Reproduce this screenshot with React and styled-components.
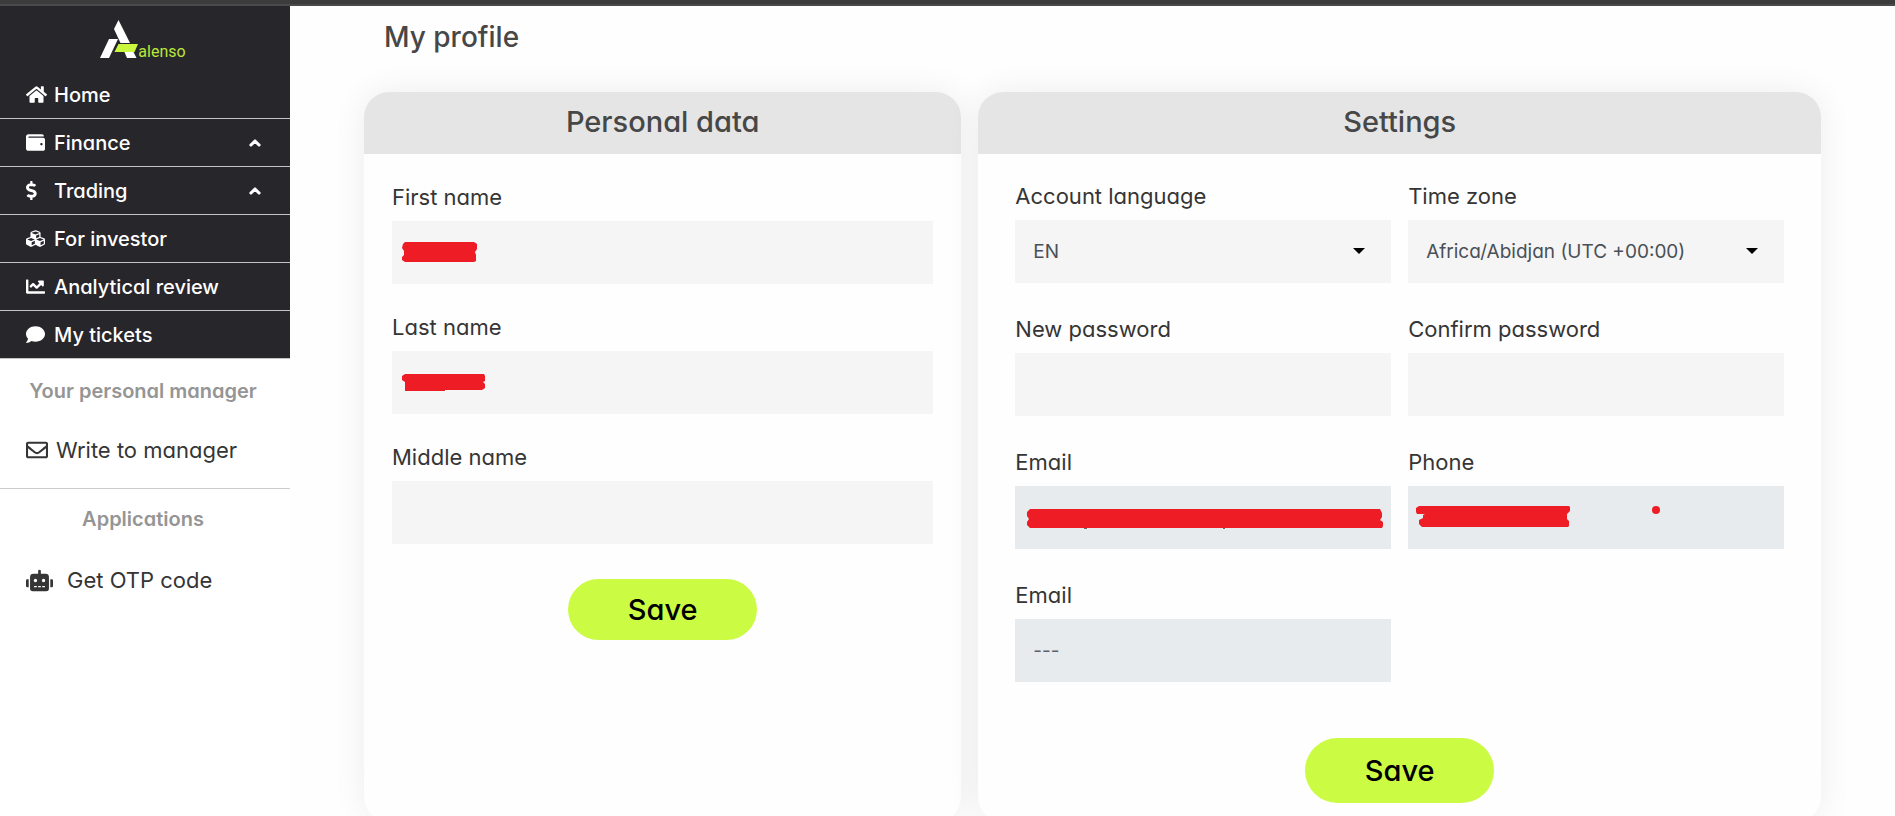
import { useId } from 'react';
import styled, { createGlobalStyle, css } from 'styled-components';
import {
    FaChartLine,
    FaChevronUp,
    FaComment,
    FaCubes,
    FaDollarSign,
    FaHome,
    FaRegEnvelope,
    FaRobot,
    FaWallet,
} from 'react-icons/fa';

const GlobalStyle = createGlobalStyle`
    *, *::before, *::after {
        box-sizing: border-box;
    }
    body {
        margin: 0;
        background: #fefefe;
        color: #353535;
        font-family: Inter, 'Open Sans', sans-serif;
        font-feature-settings: 'cv11';
        font-size: 20px;
    }
    button, input, select {
        font: inherit;
        font-feature-settings: inherit;
    }
`;

const Page = styled.div`
    display: flex;
    flex-direction: column;
    height: 100vh;
    border-top: 4px solid #3c3c3c;
`;

const TopLine = styled.div`
    flex: none;
    height: 2px;
    background: #4a4a4a;
`;

const Body = styled.div`
    display: flex;
    flex: 1;
    min-height: 0;
`;

const Sidebar = styled.aside`
    flex: none;
    width: 290px;
    background: #ffffff;
`;

const DarkBlock = styled.div`
    background: #27262b;
    color: #ffffff;
`;

const LogoLink = styled.a`
    display: flex;
    justify-content: center;
    align-items: flex-end;
    height: 65px;
    padding: 0 4px 12px 0;
    color: #b9e63b;
    text-decoration: none;
`;

const LogoMark = styled.svg`
    display: block;
    width: 38px;
    height: 40px;
`;

const LogoText = styled.span`
    font-family: Roboto, sans-serif;
    font-size: 16px;
    line-height: 14px;
`;

const MenuLink = styled.a`
    display: flex;
    align-items: center;
    height: 48px;
    padding: 0 29px 0 26px;
    border-bottom: 1px solid #c4c4c6;
    color: #ffffff;
    font-size: 20px;
    font-weight: 500;
    text-decoration: none;
`;

const MenuIcon = styled.span`
    display: flex;
    flex: none;
    width: 28px;
`;

const MenuText = styled.span`
    flex: 1;
`;

const Chevron = styled(FaChevronUp)`
    stroke: currentColor;
    stroke-width: 50px;
`;

const SideTitle = styled.h2`
    margin: 0;
    padding-right: 4px;
    color: #959595;
    font-size: 20px;
    font-weight: 600;
    line-height: 30px;
    text-align: center;
`;

const SideSection = styled.section`
    padding-top: ${({ $top }) => $top}px;
    ${({ $ruled }) => $ruled && css`
        padding-bottom: 21px;
        border-bottom: 1px solid #cccccc;
    `}
`;

const SideLink = styled.a`
    display: flex;
    align-items: center;
    gap: ${({ $gap }) => $gap}px;
    margin-top: ${({ $top }) => $top}px;
    padding-left: 26px;
    color: #353535;
    font-size: 22px;
    line-height: 34px;
    text-decoration: none;
`;

const Main = styled.main`
    flex: 1;
    min-width: 0;
    padding: 10px 74px 30px;
    overflow-y: auto;
    scrollbar-width: none;
`;

const PageTitle = styled.h1`
    margin: 0 0 34px 20px;
    color: #474747;
    font-size: 28px;
    font-weight: 500;
    line-height: 42px;
`;

const Cards = styled.div`
    display: grid;
    grid-template-columns: 41% 1fr;
    gap: 17px;
`;

const Card = styled.section`
    border-radius: 25px;
    background: #fefefe;
    box-shadow: 0 0 34px rgba(0, 0, 0, 0.07);
`;

const CardTitle = styled.h2`
    margin: 0;
    padding-bottom: 2px;
    border-radius: 25px 25px 0 0;
    background: #e5e5e5;
    color: #474747;
    font-size: 29px;
    font-weight: 500;
    line-height: 60px;
    text-align: center;
`;

const Form = styled.form`
    display: flex;
    flex-direction: column;
    align-items: center;
    padding: ${({ $top }) => $top}px ${({ $side }) => $side}px 19px;
`;

const Fields = styled.div`
    display: grid;
    grid-template-columns: repeat(${({ $columns }) => $columns}, 1fr);
    gap: ${({ $rowGap }) => $rowGap}px 17px;
    width: 100%;
`;

const FieldLabel = styled.label`
    display: block;
    margin-bottom: 7px;
    color: #353535;
    font-size: 22px;
    line-height: 34px;
`;

const FieldBox = styled.div`
    position: relative;
`;

const controlStyle = css`
    display: block;
    width: 100%;
    height: 63px;
    padding: 0 18px;
    border: 0;
    border-radius: 0;
    outline: 0;
    background: #f5f5f5;
    color: #495057;
    font-size: 19px;
`;

const Input = styled.input`
    ${controlStyle}
    &:disabled {
        background: #e8ebee;
        opacity: 1;
    }
    &::placeholder {
        color: #5b636b;
        opacity: 1;
    }
`;

const Select = styled.select`
    ${controlStyle}
    appearance: none;
    cursor: pointer;
`;

const Caret = styled.svg`
    position: absolute;
    top: 28px;
    right: 26px;
    width: 12px;
    height: 6px;
    pointer-events: none;
`;

const Scribble = styled.svg`
    position: absolute;
    top: 0;
    left: 0;
    width: 376px;
    height: 63px;
    fill: #ee1c25;
    pointer-events: none;
`;

const SaveButton = styled.button`
    width: 189px;
    height: ${({ $tall }) => ($tall ? 65 : 61)}px;
    margin-top: ${({ $tall }) => ($tall ? 56 : 35)}px;
    border: 0;
    border-radius: 33px;
    background: #cbfc43;
    color: #000000;
    font-size: 29px;
    font-weight: 500;
    cursor: pointer;
`;

const Logo = () => (
    <LogoMark viewBox="0 0 38 40" aria-hidden="true">
        <path d="M9 20h9L9 39H0z" fill="#ffffff" />
        <path d="M18.500 1l11.500 23H20.500L14 10z" fill="#ffffff" />
        <path d="M24 32h9l3.500 7H27z" fill="#ffffff" />
        <path d="M18.500 25H38l-3.500 8H14.500z" fill="#c9f83e" />
    </LogoMark>
);

const menu = [
    { text: 'Home', Icon: FaHome, size: 21 },
    { text: 'Finance', Icon: FaWallet, size: 19, open: true },
    { text: 'Trading', Icon: FaDollarSign, size: 19, open: true },
    { text: 'For investor', Icon: FaCubes, size: 19 },
    { text: 'Analytical review', Icon: FaChartLine, size: 19 },
    { text: 'My tickets', Icon: FaComment, size: 19 },
];

const Field = ({ label, options, scribble, ...props }) => {
    const id = useId();
    return (
        <div>
            <FieldLabel htmlFor={id}>{label}</FieldLabel>
            <FieldBox>
                {options ? (
                    <Select id={id} {...props}>
                        {options.map((option) => (
                            <option key={option}>{option}</option>
                        ))}
                    </Select>
                ) : (
                    <Input id={id} {...props} />
                )}
                {options && (
                    <Caret viewBox="0 0 12 6" aria-hidden="true">
                        <path d="M0 0h12L6 6z" />
                    </Caret>
                )}
                {scribble && (
                    <Scribble viewBox="0 0 376 63" aria-hidden="true">
                        {scribble}
                    </Scribble>
                )}
            </FieldBox>
        </div>
    );
};

const App = () => (
    <>
        <GlobalStyle />
        <Page>
            <TopLine />
            <Body>
                <Sidebar>
                    <DarkBlock>
                        <LogoLink href="#home">
                            <Logo />
                            <LogoText>alenso</LogoText>
                        </LogoLink>
                        <nav>
                            {menu.map(({ text, Icon, size, open }) => (
                                <MenuLink key={text} href="#menu">
                                    <MenuIcon>
                                        <Icon size={size} preserveAspectRatio="xMinYMid" />
                                    </MenuIcon>
                                    <MenuText>{text}</MenuText>
                                    {open && <Chevron size={12} />}
                                </MenuLink>
                            ))}
                        </nav>
                    </DarkBlock>
                    <SideSection $top={17} $ruled>
                        <SideTitle>Your personal manager</SideTitle>
                        <SideLink href="#manager" $gap={8} $top={27}>
                            <FaRegEnvelope size={22} />
                            Write to manager
                        </SideLink>
                    </SideSection>
                    <SideSection $top={15}>
                        <SideTitle>Applications</SideTitle>
                        <SideLink href="#otp" $gap={14} $top={29}>
                            <FaRobot size={27} />
                            Get OTP code
                        </SideLink>
                    </SideSection>
                </Sidebar>
                <Main>
                    <PageTitle>My profile</PageTitle>
                    <Cards>
                        <Card>
                            <CardTitle>Personal data</CardTitle>
                            <Form $top={26} $side={28}>
                                <Fields $columns={1} $rowGap={26}>
                                    <Field
                                        label="First name"
                                        scribble={
                                            <path d="M13 21H82l3 2v5l-2 3 1 3v6l-2 1H13l-3-2v-3l2-2v-4l-2-3 1-4z" />
                                        }
                                    />
                                    <Field
                                        label="Last name"
                                        scribble={
                                            <path d="M13 23H92l1 2v5l-2 1 2 2v4l-3 2H53v1H13v-9l-3-2v-4z" />
                                        }
                                    />
                                    <Field label="Middle name" />
                                </Fields>
                                <SaveButton type="button">Save</SaveButton>
                            </Form>
                        </Card>
                        <Card>
                            <CardTitle>Settings</CardTitle>
                            <Form $top={25} $side={37}>
                                <Fields $columns={2} $rowGap={29}>
                                    <Field label="Account language" options={['EN']} />
                                    <Field
                                        label="Time zone"
                                        options={['Africa/Abidjan (UTC +00:00)']}
                                    />
                                    <Field label="New password" type="password" />
                                    <Field label="Confirm password" type="password" />
                                    <Field
                                        label="Email"
                                        disabled
                                        scribble={
                                            <>
                                                <path d="M15 23H365l2 4v4l-2 3 3 2v4l-1 2H15l-3-3v-3l2-3-2-3v-4z" />
                                                <path d="M69 42h3v1h-3zM208 42h2v1h-2z" fill="#666666" />
                                            </>
                                        }
                                    />
                                    <Field
                                        label="Phone"
                                        disabled
                                        scribble={
                                            <>
                                                <path d="M11 20H161l1 1v4l-3 3v5l2 2v5l-1 1H14l-3-3v-4l4-2v-3l2-1H9l-1-2v-4z" />
                                                <circle cx="248" cy="24" r="4" />
                                            </>
                                        }
                                    />
                                    <Field label="Email" disabled placeholder="---" />
                                </Fields>
                                <SaveButton type="button" $tall>Save</SaveButton>
                            </Form>
                        </Card>
                    </Cards>
                </Main>
            </Body>
        </Page>
    </>
);

export default App;
